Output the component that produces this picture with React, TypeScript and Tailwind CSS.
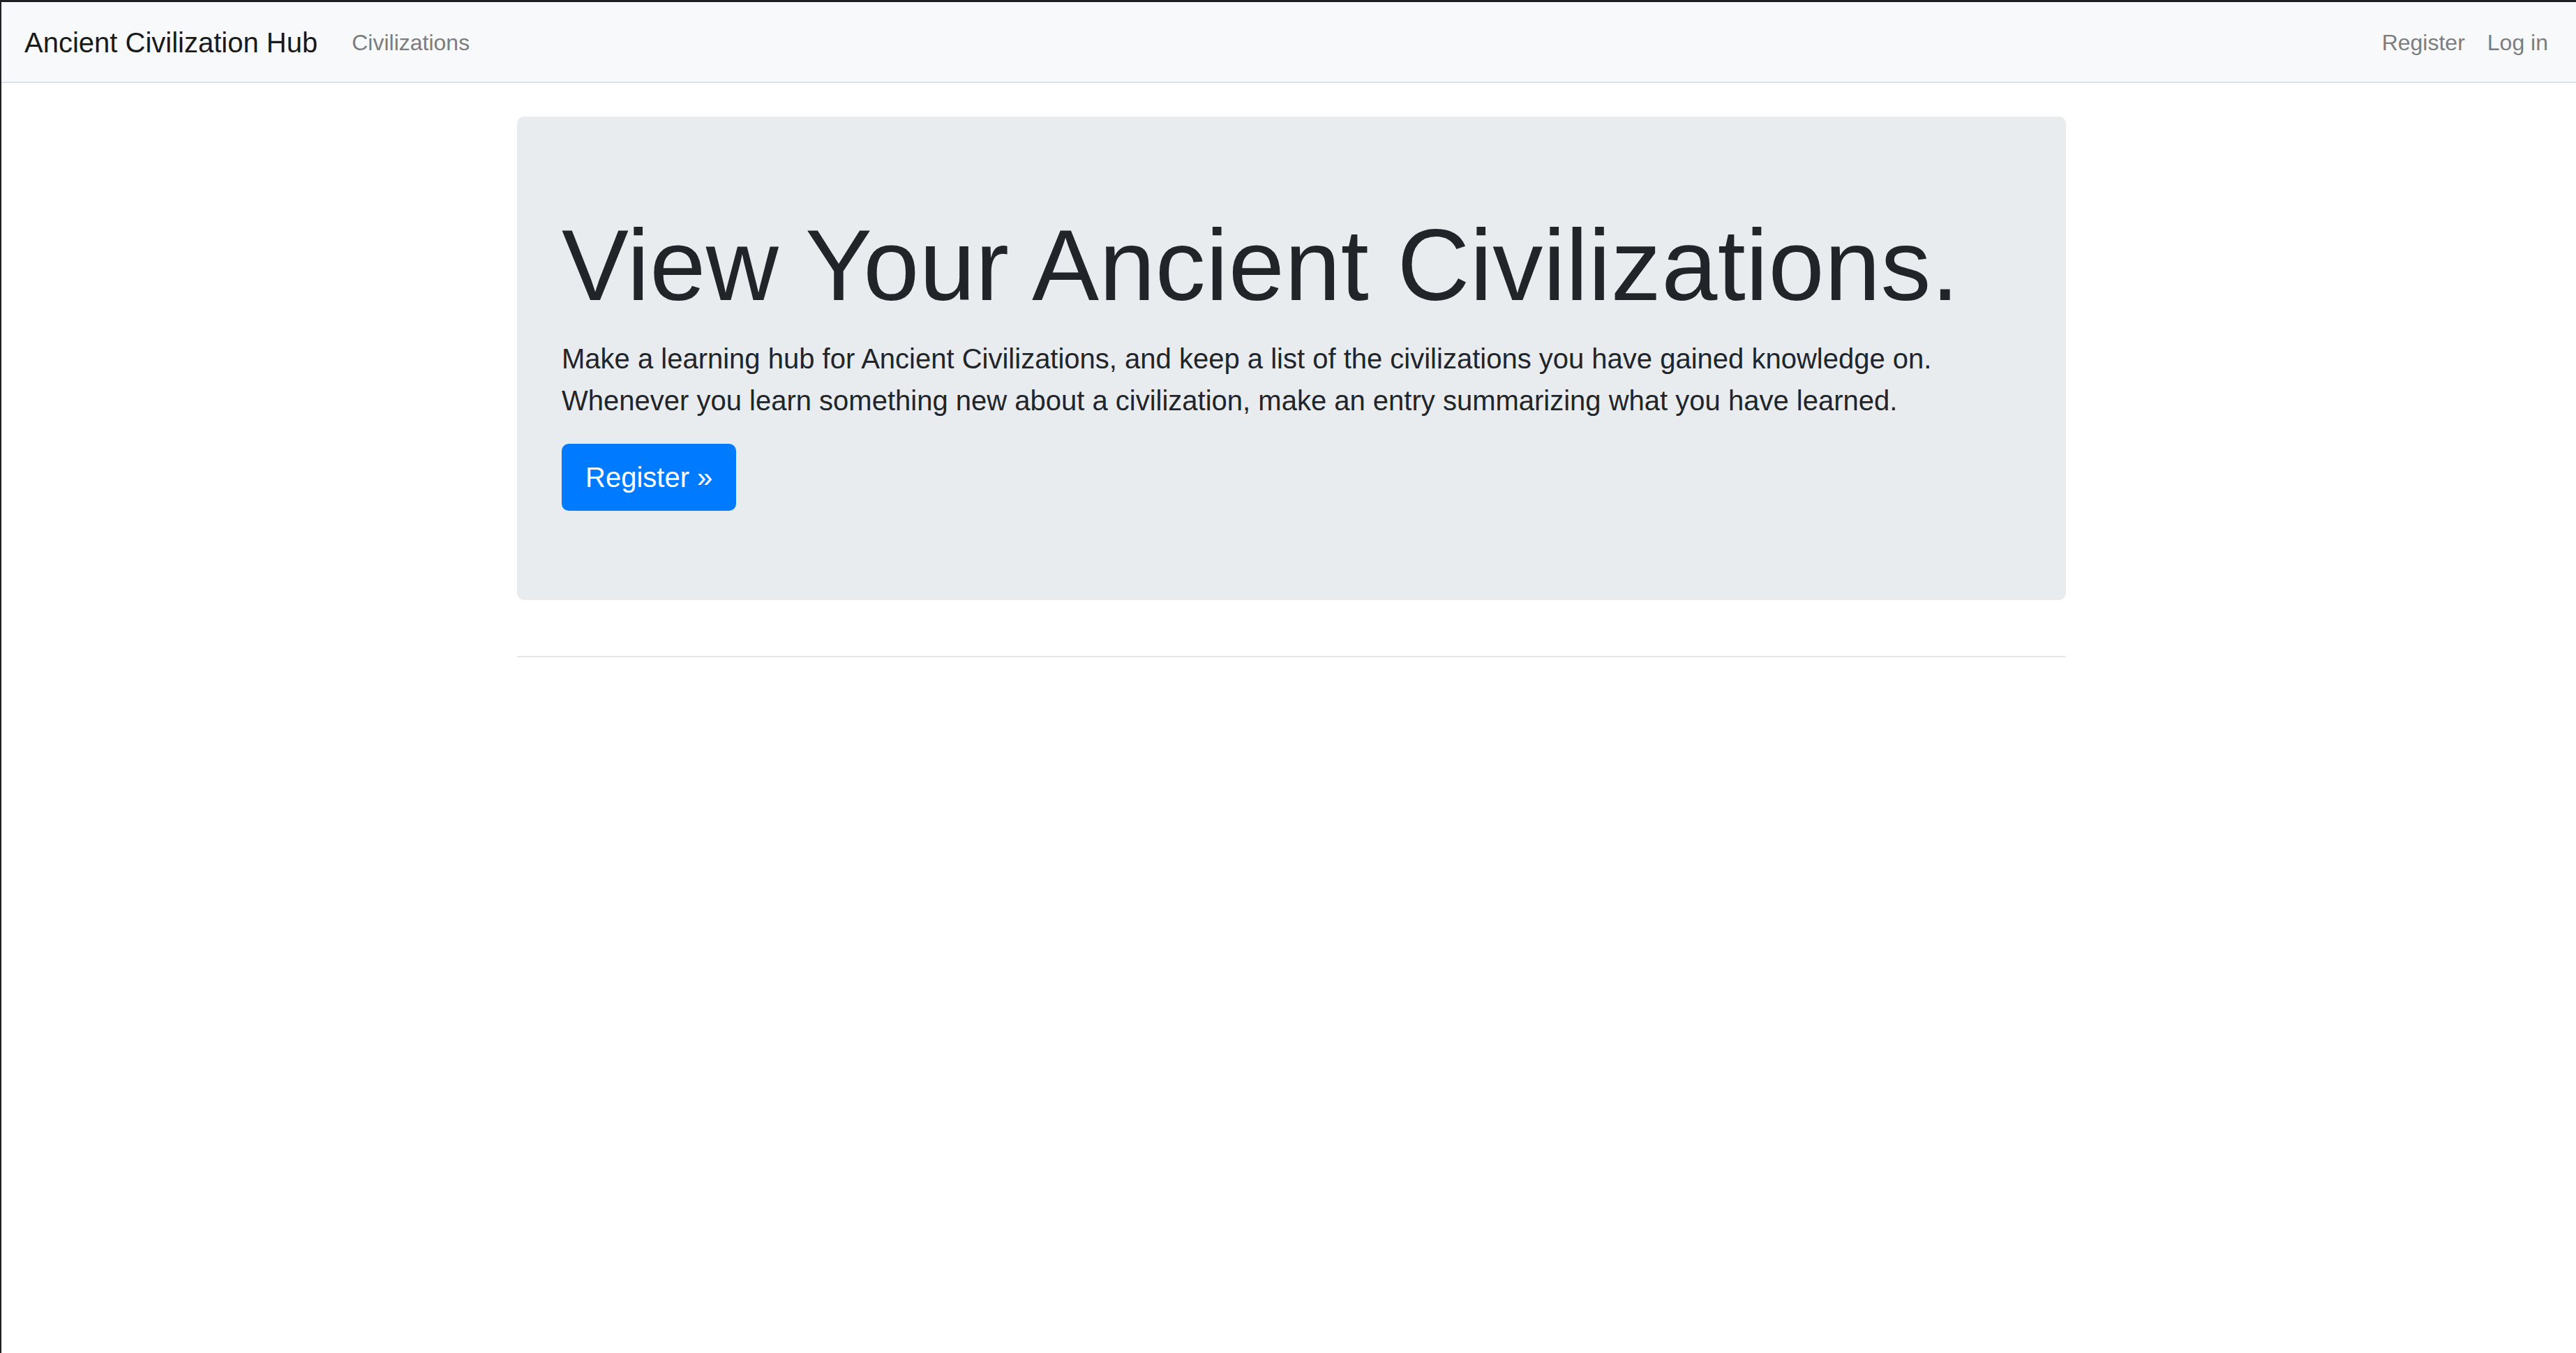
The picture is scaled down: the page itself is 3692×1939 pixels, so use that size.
const navLink = 'px-[16px] py-[16px] text-[32px] leading-[48px] text-[#7c7d7e] hover:text-[#4d4e4f]';

function Navbar() {
  return (
    <nav className="flex h-[116px] items-center justify-between border-b-2 border-[#dee2e6] bg-[#f8f9fa] pt-[2px] pl-[33px] pr-[24px]">
      <div className="flex items-center">
        <a href="#" className="mr-[33px] py-[10px] text-[40px] leading-[60px] text-[#191a1a]">
          Ancient Civilization Hub
        </a>
        <a href="#" className={navLink}>
          Civilizations
        </a>
      </div>
      <div className="flex items-center">
        <a href="#" className={navLink}>
          Register
        </a>
        <a href="#" className={navLink}>
          Log in
        </a>
      </div>
    </nav>
  );
}

function Jumbotron() {
  return (
    <div className="rounded-[10px] bg-[#e9ecef] px-[64px] py-[128px]">
      <h1 className="mb-[16px] text-[144px] font-light leading-[1.2] tracking-[0.4px] text-[#212529]">
        View Your Ancient Civilizations.
      </h1>
      <p className="mb-[32px] text-[40px] font-light leading-[60px] text-[#212529]">
        Make a learning hub for Ancient Civilizations, and keep a list of the civilizations you have gained knowledge on.
        <br />
        Whenever you learn something new about a civilization, make an entry summarizing what you have learned.
      </p>
      <a
        href="#"
        className="inline-block rounded-[10px] border-2 border-[#007bff] bg-[#007bff] px-[32px] py-[16px] text-[40px] leading-[60px] text-white"
      >
        Register &raquo;
      </a>
    </div>
  );
}

export default function App() {
  return (
    <div className="min-h-[1939px] border-t-[3px] border-l-2 border-[#1f2023] bg-white font-['Liberation_Sans',Arial,sans-serif]">
      <Navbar />
      <main className="ml-[739px] mt-[48px] w-[2220px]">
        <Jumbotron />
        <hr className="mt-[80px] border-t-2 border-[#e6e6e6]" />
      </main>
    </div>
  );
}
